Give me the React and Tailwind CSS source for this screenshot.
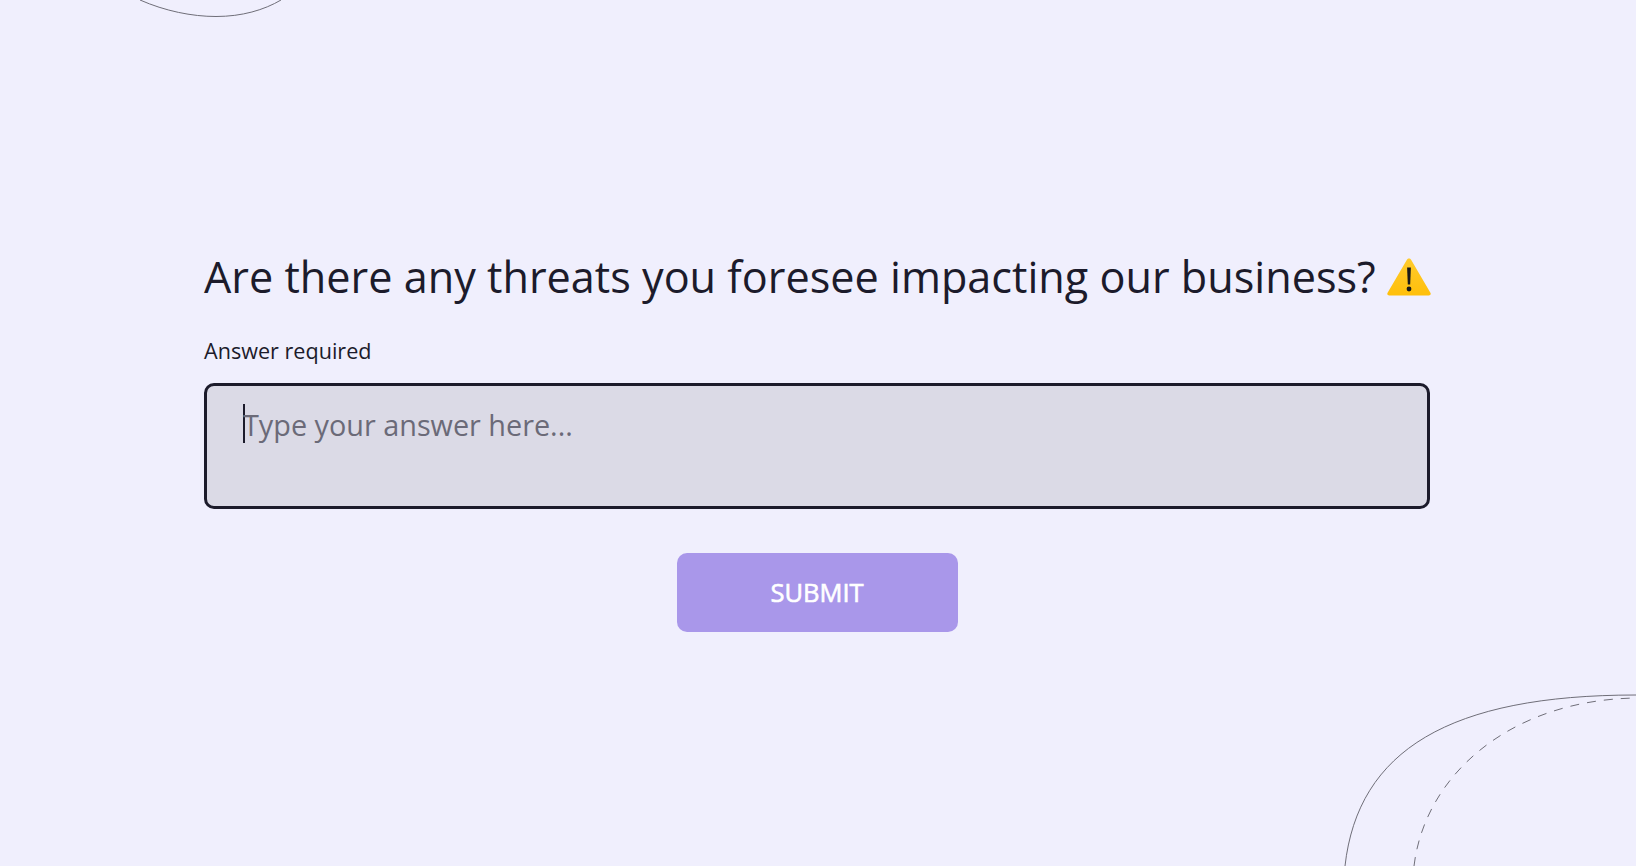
const font = { fontFamily: '"Open Sans", sans-serif' };

const WarningIcon = () => (
    <svg viewBox="0 0 44 38" className="mb-[1px] ml-[11px] h-[38px] w-[44px] shrink-0">
        <defs>
            <linearGradient id="warn" x1="0" y1="0" x2="0" y2="1">
                <stop offset="0" stopColor="#ffcb2e" />
                <stop offset="1" stopColor="#ffbf0a" />
            </linearGradient>
        </defs>
        <path d="M22 .5c.9 0 1.600.5 2.100 1.300l19.300 33c.8 1.400-.1 2.700-1.700 2.700H2.300C.7 37.500-.2 36.200.6 34.800l19.300-33c.5-.8 1.200-1.300 2.100-1.300z" fill="url(#warn)" />
        <path d="M20.100 9.500h3.800l-.7 17h-2.400z" fill="#1a1a1a" />
        <circle cx="22" cy="31" r="2.400" fill="#1a1a1a" />
    </svg>
);

export default function App() {
    return (
        <div className="relative flex h-[866px] w-full items-center justify-center overflow-hidden bg-[#f0effd] pr-[2px]" style={font}>
            <svg className="absolute top-0 left-0 h-[40px] w-[400px]" viewBox="0 0 400 40" fill="none">
                <path d="M140 0C165 11 192 16.500 216 16.500C242 16.500 264 10 281 0" stroke="#6f6e78" strokeWidth="1" />
            </svg>
            <svg className="absolute right-0 bottom-0 h-[196px] w-[336px]" viewBox="1300 670 336 196" fill="none">
                <path d="M1345 866C1358 750 1450 695 1636 695" stroke="#6f6e78" strokeWidth="1" />
                <path d="M1414 866C1425 775 1510 700 1636 698" stroke="#6f6e78" strokeWidth="1" strokeDasharray="9 8" />
            </svg>

            <main className="flex w-[1226px] flex-col pt-[13px]">
                <h1 className="flex items-center text-[43.200px] leading-[60px] font-normal whitespace-nowrap text-[#1c1b2b]">
                    Are there any threats you foresee impacting our business?
                    <WarningIcon />
                </h1>
                <label className="mt-[29px] text-[21.600px] leading-[30px] text-[#1c1b2b]">Answer required</label>
                <div className="mt-[17px] h-[126px] rounded-[10px] border-[3px] border-[#1c1b2b] bg-[#dbdae6] pt-[18px] pl-[36px]">
                    <div className="flex h-[39px] items-center">
                        <span className="h-[39px] w-[2px] shrink-0 bg-[#1c1b2b]" />
                        <span className="mt-[2px] -ml-[2px] text-[28.800px] leading-[38px] text-[#6b6a78]">Type your answer here...</span>
                    </div>
                </div>
                <button className="mx-auto mt-[44px] h-[79px] w-[281px] rounded-[10px] bg-[#a997ea] text-[25.500px] text-white [-webkit-text-stroke:0.6px_white]">
                    SUBMIT
                </button>
            </main>
        </div>
    );
}
